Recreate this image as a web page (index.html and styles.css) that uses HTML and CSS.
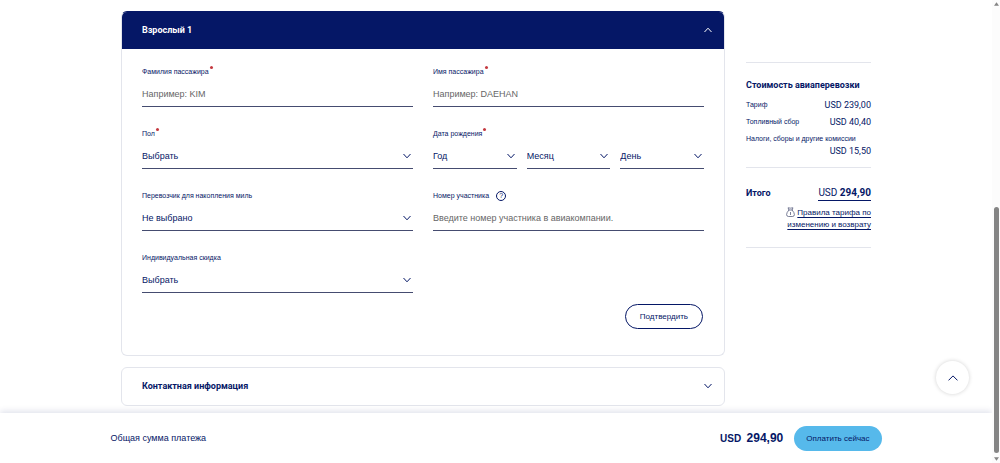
FILE: index.html
```html
<!DOCTYPE html>
<html lang="ru">
<head>
  <meta charset="UTF-8">
  <title>Данные пассажиров</title>
  <link rel="stylesheet" href="styles.css">
</head>
<body>
  <main class="content">
    <div class="passengers">
      <!-- Passenger form -->
      <section class="card">
        <button class="card-header open" type="button" aria-expanded="true">
          <span>Взрослый 1</span>
          <svg class="chevron" viewBox="0 0 8 6"><path d="M0.5 5L4 1.2L7.5 5"/></svg>
        </button>
        <form class="card-body">
          <div class="fields">
            <div class="field">
              <label for="lastName">Фамилия пассажира<i class="required"></i></label>
              <input type="text" id="lastName" placeholder="Например: KIM">
            </div>
            <div class="field">
              <label for="firstName">Имя пассажира<i class="required"></i></label>
              <input type="text" id="firstName" placeholder="Например: DAEHAN">
            </div>
            <div class="field">
              <label for="gender">Пол<i class="required"></i></label>
              <div class="select">
                <select id="gender"><option>Выбрать</option></select>
                <svg class="chevron" viewBox="0 0 8 6"><path d="M0.5 1L4 4.8L7.5 1"/></svg>
              </div>
            </div>
            <div class="field">
              <label for="birthYear">Дата рождения<i class="required"></i></label>
              <div class="date-row">
                <div class="select">
                  <select id="birthYear"><option>Год</option></select>
                  <svg class="chevron" viewBox="0 0 8 6"><path d="M0.5 1L4 4.8L7.5 1"/></svg>
                </div>
                <div class="select">
                  <select id="birthMonth" aria-label="Месяц"><option>Месяц</option></select>
                  <svg class="chevron" viewBox="0 0 8 6"><path d="M0.5 1L4 4.8L7.5 1"/></svg>
                </div>
                <div class="select">
                  <select id="birthDay" aria-label="День"><option>День</option></select>
                  <svg class="chevron" viewBox="0 0 8 6"><path d="M0.5 1L4 4.8L7.5 1"/></svg>
                </div>
              </div>
            </div>
            <div class="field">
              <label for="carrier">Перевозчик для накопления миль</label>
              <div class="select">
                <select id="carrier"><option>Не выбрано</option></select>
                <svg class="chevron" viewBox="0 0 8 6"><path d="M0.5 1L4 4.8L7.5 1"/></svg>
              </div>
            </div>
            <div class="field">
              <div class="label-row">
                <label for="memberNumber">Номер участника</label>
                <button class="help" type="button" aria-label="Подсказка">?</button>
              </div>
              <input type="text" id="memberNumber" placeholder="Введите номер участника в авиакомпании.">
            </div>
            <div class="field">
              <label for="discount">Индивидуальная скидка</label>
              <div class="select">
                <select id="discount"><option>Выбрать</option></select>
                <svg class="chevron" viewBox="0 0 8 6"><path d="M0.5 1L4 4.8L7.5 1"/></svg>
              </div>
            </div>
          </div>
          <div class="actions">
            <button class="btn-confirm" type="button">Подтвердить</button>
          </div>
        </form>
      </section>

      <!-- Contacts, collapsed -->
      <section class="card">
        <button class="card-header" type="button" aria-expanded="false">
          <span>Контактная информация</span>
          <svg class="chevron" viewBox="0 0 8 6"><path d="M0.5 1L4 4.8L7.5 1"/></svg>
        </button>
      </section>
    </div>

    <!-- Price summary -->
    <aside class="summary">
      <div class="fare">
        <h2>Стоимость авиаперевозки</h2>
        <dl>
          <div class="fare-row"><dt>Тариф</dt><dd>USD 239,00</dd></div>
          <div class="fare-row"><dt>Топливный сбор</dt><dd>USD 40,40</dd></div>
          <div class="fare-row"><dt>Налоги, сборы и другие комиссии</dt><dd>USD 15,50</dd></div>
        </dl>
      </div>
      <div class="total">
        <div class="total-row">
          <h2>Итого</h2>
          <button class="total-price" type="button">USD <b>294,90</b></button>
        </div>
        <p class="rules">
          <svg class="bag" viewBox="0 0 9 10"><path d="M3 3L2 0.8Q4.5 1.5 7 0.8L6 3M2.5 3H6.5M3 3Q0.6 5.5 0.6 7.6Q0.6 9.5 2.5 9.5H6.5Q8.4 9.5 8.4 7.6Q8.4 5.5 6 3M4.5 5V8"/></svg>
          <a href="#">Правила тарифа по изменению и возврату</a>
        </p>
      </div>
    </aside>
  </main>

  <footer class="pay-bar">
    <div class="pay-inner">
      <span class="pay-label">Общая сумма платежа</span>
      <span class="pay-sum"><small>USD</small> 294,90</span>
      <button class="btn-pay" type="button">Оплатить сейчас</button>
    </div>
  </footer>

  <button class="to-top" type="button" aria-label="Наверх">
    <svg viewBox="0 0 10 6"><path d="M0.5 5.4L5 0.9L9.5 5.4"/></svg>
  </button>

  <div class="scrollbar">
    <svg viewBox="0 0 6 4"><path d="M3 0L6 4H0z"/></svg>
    <div class="track"><div class="thumb"></div></div>
    <svg viewBox="0 0 6 4"><path d="M0 0H6L3 4z"/></svg>
  </div>
</body>
</html>
```

FILE: styles.css
```css
* {
  box-sizing: border-box;
}
body {
  margin: 0;
  padding-right: 8px;
  min-height: 100vh;
  display: flex;
  flex-direction: column;
  background-color: #fff;
  color: #051766;
  font-family: "Liberation Sans", Arial, sans-serif;
  font-size: 9px;
}
button, input, select {
  font-family: inherit;
  font-size: inherit;
  color: inherit;
  border: none;
  border-radius: 0;
  background: none;
  padding: 0;
  margin: 0;
}
button {
  cursor: pointer;
}
h2, p, dl, dd {
  margin: 0;
}
h2 {
  font-family: Roboto, Arial, sans-serif;
  font-size: 9px;
  line-height: 12px;
}
.content {
  flex: 1;
  width: 100%;
  max-width: 750px;
  margin: 0 auto;
  padding: 11px 0 7px;
  display: flex;
  align-items: flex-start;
  gap: 21px;
}
.passengers {
  flex: 1;
  display: flex;
  flex-direction: column;
  gap: 11px;
}

/* Cards */
.card {
  border: 1px solid #e3e5ec;
  border-radius: 6px;
  overflow: hidden;
}
.card-header {
  width: 100%;
  height: 37px;
  padding: 0 12px 2px 20px;
  display: flex;
  align-items: center;
  justify-content: space-between;
  font-family: Roboto, Arial, sans-serif;
  font-weight: bold;
}
.card:has(.open) {
  border-top-color: #051766;
}
.card-header.open {
  background-color: #051766;
  color: #fff;
}
.chevron {
  width: 8px;
  height: 6px;
  fill: none;
  stroke: currentColor;
}
.card-body {
  padding: 15px 20px 26px;
}

/* Fields */
.fields {
  display: grid;
  grid-template-columns: 1fr 1fr;
  gap: 19px 20px;
}
.field {
  display: flex;
  flex-direction: column;
  gap: 2px;
}
.field label {
  font-size: 7px;
  line-height: 16px;
}
.label-row {
  display: flex;
  align-items: center;
  gap: 7px;
  height: 16px;
}
.required {
  display: inline-block;
  width: 3px;
  height: 3px;
  border-radius: 50%;
  background-color: #c4393f;
  vertical-align: 5px;
  margin-left: 1px;
}
.help {
  width: 10px;
  height: 10px;
  border: 1px solid #051766;
  border-radius: 50%;
  font-size: 7px;
  line-height: 8px;
  text-align: center;
}
.field input, .field select {
  width: 100%;
  height: 25px;
  border-bottom: 1px solid #454c70;
  appearance: none;
  outline: none;
}
.field input::placeholder {
  color: #666;
  opacity: 1;
}
.select {
  position: relative;
}
.select .chevron {
  position: absolute;
  right: 2px;
  top: 9px;
  pointer-events: none;
}
.date-row {
  display: grid;
  grid-template-columns: repeat(3, 1fr);
  gap: 10px;
}
.actions {
  display: flex;
  justify-content: flex-end;
  margin-top: 11px;
  padding-right: 1px;
}
.btn-confirm {
  height: 25px;
  padding: 0 14px;
  border: 1px solid #051766;
  border-radius: 13px;
  font-size: 8px;
}

/* Price summary */
.summary {
  width: 125px;
  margin-top: 51px;
  border-top: 1px solid #e3e5ec;
}
.fare {
  padding: 16px 0 10px;
  border-bottom: 1px solid #e3e5ec;
}
.fare dl {
  margin-top: 8px;
  display: flex;
  flex-direction: column;
  gap: 5px;
}
.fare-row {
  display: flex;
  flex-wrap: wrap;
  justify-content: space-between;
  line-height: 12px;
}
.fare-row dt {
  font-size: 7px;
}
.fare-row dd {
  margin-left: auto;
  font-family: Roboto, Arial, sans-serif;
}
.total {
  padding: 16px 0;
  border-bottom: 1px solid #e3e5ec;
}
.total-row {
  display: flex;
  justify-content: space-between;
  align-items: center;
}
.total-price {
  height: 17px;
  border-bottom: 1px solid #051766;
  font-family: Roboto, Arial, sans-serif;
  font-size: 10px;
}
.rules {
  margin-top: 6px;
  text-align: right;
  font-size: 8px;
  line-height: 12px;
}
.rules a {
  color: inherit;
  text-underline-offset: 2px;
}
.bag {
  width: 9px;
  height: 10px;
  vertical-align: -2px;
  fill: none;
  stroke: #454c70;
  stroke-width: 0.7;
}

/* Bottom payment bar */
.pay-bar {
  position: sticky;
  bottom: 0;
  background-color: #fff;
  box-shadow: 0 -2px 6px rgba(5, 23, 102, 0.12);
}
.pay-inner {
  max-width: 771px;
  height: 50px;
  margin: 0 auto;
  display: flex;
  align-items: center;
}
.pay-label {
  flex: 1;
}
.pay-sum {
  font-size: 12px;
  font-weight: bold;
  margin-right: 11px;
}
.pay-sum small {
  font-size: 10px;
  margin-right: 2px;
}
.btn-pay {
  height: 25px;
  padding: 0 12px;
  border-radius: 13px;
  background-color: #56b9eb;
  font-size: 8px;
}
.to-top {
  position: fixed;
  right: 31px;
  bottom: 69px;
  width: 33px;
  height: 33px;
  border-radius: 50%;
  background-color: #fff;
  box-shadow: 0 0 4px rgba(0, 0, 0, 0.18);
  display: flex;
  align-items: center;
  justify-content: center;
}
.to-top svg {
  width: 10px;
  height: 6px;
  fill: none;
  stroke: #051766;
}

/* Page scrollbar */
.scrollbar {
  position: fixed;
  top: 0;
  right: 0;
  bottom: 0;
  width: 8px;
  padding: 2px 0;
  display: flex;
  flex-direction: column;
  align-items: center;
  background-color: #fcfcfc;
}
.scrollbar svg {
  width: 5px;
  height: 4px;
  fill: #858585;
}
.track {
  flex: 1;
  display: flex;
  align-items: flex-end;
  padding-bottom: 4px;
}
.thumb {
  width: 5px;
  height: 55%;
  border-radius: 3px;
  background-color: #858585;
}
```
